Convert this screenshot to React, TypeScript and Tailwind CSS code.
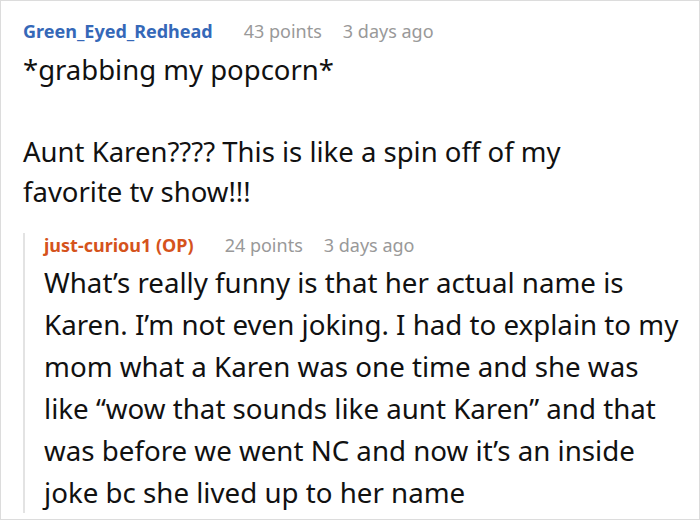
const font = { fontFamily: '"Noto Sans", "Open Sans", sans-serif' };

const Meta = ({ name, color, points }: { name: string; color: string; points: string }) => (
  <div className="flex items-baseline gap-[31px] text-[18px] leading-[24px]">
    <span className={`font-bold ${color}`}>{name}</span>
    <div className="flex gap-[21px] text-[#999999]">
      <span>{points}</span>
      <span>3 days ago</span>
    </div>
  </div>
);

export default function App() {
  return (
    <div style={font} className="w-[700px] h-[520px] bg-white border border-[#dcdcdc] overflow-hidden">
      <div className="pl-[22px] pt-[18px] pr-[4px]">
        <Meta name="Green_Eyed_Redhead" color="text-[#3568b8]" points="43 points" />
        <div className="mt-[7px] text-[27.5px] leading-[40px] text-[#111111] max-w-[620px]">
          <p>*grabbing my popcorn*</p>
          <p className="mt-[42px]">Aunt Karen???? This is like a spin off of my favorite tv show!!!</p>
        </div>

        <div className="mt-[21px] border-l-2 border-[#e3e3e3] pl-[19px]">
          <Meta name="just-curiou1 (OP)" color="text-[#d5531c]" points="24 points" />
          <p className="mt-[4px] text-[27.7px] leading-[42px] text-[#111111] whitespace-nowrap">
            What’s really funny is that her actual name is
            <br />
            Karen. I’m not even joking. I had to explain to my
            <br />
            mom what a Karen was one time and she was
            <br />
            like “wow that sounds like aunt Karen” and that
            <br />
            was before we went NC and now it’s an inside
            <br />
            joke bc she lived up to her name
          </p>
        </div>
      </div>
    </div>
  );
}
